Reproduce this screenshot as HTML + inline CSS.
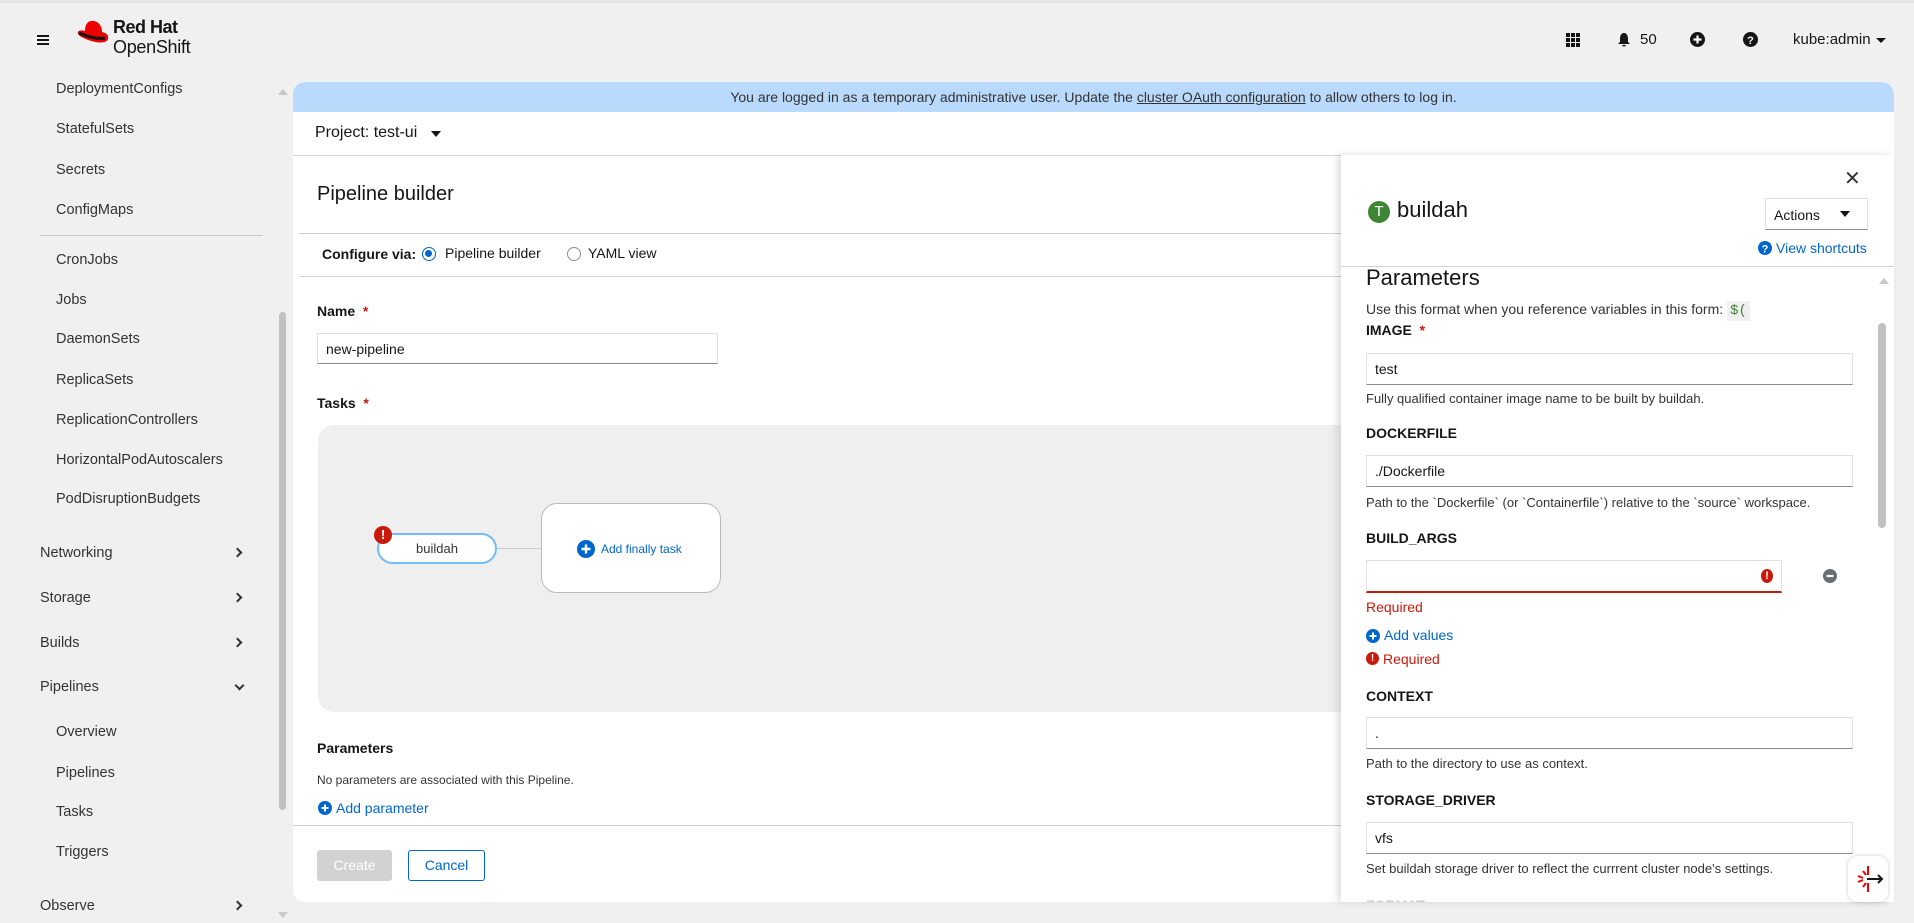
<!DOCTYPE html>
<html><head><meta charset="utf-8"><style>
*{box-sizing:border-box;margin:0;padding:0}
body{width:1914px;height:922px;overflow:hidden;background:#f0f0f0;font-family:"Liberation Sans",sans-serif;color:#151515;position:relative}
.a{position:absolute;white-space:nowrap}
.nav{font-size:14.5px;color:#333}
.lbl{font-size:14px;font-weight:bold}
.help{font-size:13px;color:#333}
.inp{position:absolute;background:#fff;border:1px solid #e0e0e0;border-bottom:1px solid #8a8d90;font-size:14px;padding:7px 8px}
.chev{position:absolute;width:7px;height:7px;border-right:2px solid #333;border-bottom:2px solid #333}
</style></head><body>
<div class="a" style="left:0;top:0;width:1914px;height:3px;background:#e4e4e4"></div>
<div class="a" style="left:37px;top:35px;width:12px;height:2px;background:#151515;box-shadow:0 4px 0 #151515,0 8px 0 #151515"></div>
<svg class="a" style="left:76px;top:18px" width="34" height="28" viewBox="0 0 34 28"><path d="M9 13 C9 6 12 2 18 3 C23 4 26 8 26 14 C31 15 33 18 32 21 C30 26 21 25 12 22 C5 19 1 17 2 14 C3 12 6 12 9 13Z" fill="#e00"/><path d="M3 15 C10 18 22 22 29 20" stroke="#151515" stroke-width="3" fill="none"/></svg>
<div class="a" style="left:113px;top:17px;font-size:18px;font-weight:bold;letter-spacing:-0.5px">Red Hat</div>
<div class="a" style="left:113px;top:37px;font-size:18px;letter-spacing:-0.3px">OpenShift</div>
<svg class="a" style="left:1566px;top:33px" width="14" height="14"><g fill="#151515"><rect x="0" y="0" width="4" height="4"/><rect x="5" y="0" width="4" height="4"/><rect x="10" y="0" width="4" height="4"/><rect x="0" y="5" width="4" height="4"/><rect x="5" y="5" width="4" height="4"/><rect x="10" y="5" width="4" height="4"/><rect x="0" y="10" width="4" height="4"/><rect x="5" y="10" width="4" height="4"/><rect x="10" y="10" width="4" height="4"/></g></svg>
<svg class="a" style="left:1617px;top:32px" width="14" height="16" viewBox="0 0 14 16"><path d="M7 1 C10 1 11 4 11 7 L11 10 L13 12 L1 12 L3 10 L3 7 C3 4 4 1 7 1Z M5 13 L9 13 C9 15 5 15 5 13Z" fill="#151515"/></svg>
<div class="a" style="left:1640px;top:31px;font-size:15px">50</div>
<svg class="a" style="left:1690px;top:32px" width="15" height="15"><circle cx="7.5" cy="7.5" r="7.5" fill="#151515"/><path d="M7.5 3.5v8M3.5 7.5h8" stroke="#fff" stroke-width="2.2"/></svg>
<svg class="a" style="left:1743px;top:32px" width="15" height="15"><circle cx="7.5" cy="7.5" r="7.5" fill="#151515"/><text x="7.5" y="12" font-size="11" font-weight="bold" fill="#fff" text-anchor="middle" font-family="Liberation Sans">?</text></svg>
<div class="a" style="left:1793px;top:31px;font-size:15px">kube:admin</div>
<div class="a" style="left:1876px;top:38px;border:5px solid transparent;border-top:5px solid #151515"></div>

<div class="a nav" style="left:56px;top:81px">DeploymentConfigs</div>
<div class="a nav" style="left:56px;top:121px">StatefulSets</div>
<div class="a nav" style="left:56px;top:162px">Secrets</div>
<div class="a nav" style="left:56px;top:202px">ConfigMaps</div>
<div class="a" style="left:40px;top:235px;width:223px;height:1px;background:#c7c7c7"></div>
<div class="a nav" style="left:56px;top:252px">CronJobs</div>
<div class="a nav" style="left:56px;top:292px">Jobs</div>
<div class="a nav" style="left:56px;top:331px">DaemonSets</div>
<div class="a nav" style="left:56px;top:372px">ReplicaSets</div>
<div class="a nav" style="left:56px;top:412px">ReplicationControllers</div>
<div class="a nav" style="left:56px;top:452px">HorizontalPodAutoscalers</div>
<div class="a nav" style="left:56px;top:491px">PodDisruptionBudgets</div>
<div class="a nav" style="left:40px;top:545px">Networking</div>
<div class="a nav" style="left:40px;top:590px">Storage</div>
<div class="a nav" style="left:40px;top:635px">Builds</div>
<div class="a nav" style="left:40px;top:679px">Pipelines</div>
<div class="a nav" style="left:56px;top:724px">Overview</div>
<div class="a nav" style="left:56px;top:765px">Pipelines</div>
<div class="a nav" style="left:56px;top:804px">Tasks</div>
<div class="a nav" style="left:56px;top:844px">Triggers</div>
<div class="a nav" style="left:40px;top:898px">Observe</div>
<div class="chev" style="left:234px;top:549px;transform:rotate(-45deg)"></div>
<div class="chev" style="left:234px;top:594px;transform:rotate(-45deg)"></div>
<div class="chev" style="left:234px;top:639px;transform:rotate(-45deg)"></div>
<div class="chev" style="left:236px;top:682px;transform:rotate(45deg)"></div>
<div class="chev" style="left:234px;top:902px;transform:rotate(-45deg)"></div>
<div class="a" style="left:278px;top:84px;border:5px solid transparent;border-bottom:6px solid #c8c8c8"></div>
<div class="a" style="left:279px;top:312px;width:7px;height:498px;background:#c1c1c1;border-radius:4px"></div>
<div class="a" style="left:278px;top:912px;border:5px solid transparent;border-top:6px solid #c8c8c8"></div>

<div class="a" style="left:293px;top:82px;width:1601px;height:820px;background:#fff;border-radius:12px;overflow:hidden">
 <div class="a" style="left:0;top:0;width:1601px;height:30px;background:#b9dafc;border-radius:12px 12px 0 0"></div>
 <div class="a" style="left:0;top:7px;width:1601px;text-align:center;font-size:14px;color:#333">You are logged in as a temporary administrative user. Update the <u>cluster OAuth configuration</u> to allow others to log in.</div>
 <div class="a" style="left:22px;top:42px;font-size:16px">Project: test-ui</div>
 <div class="a" style="left:138px;top:49px;border:5px solid transparent;border-top:6px solid #151515"></div>
 <div class="a" style="left:0;top:73px;width:1601px;height:1px;background:#d2d2d2"></div>
 <div class="a" style="left:24px;top:101px;font-size:20px">Pipeline builder</div>
 <div class="a" style="left:6px;top:151px;width:1100px;height:1px;background:#d2d2d2"></div>
 <div class="a" style="left:29px;top:164px;font-size:14px;font-weight:bold">Configure via:</div>
 <div class="a" style="left:129px;top:165px;width:14px;height:14px;border:1.5px solid #06c;border-radius:50%"><div style="margin:2px;width:7px;height:7px;background:#06c;border-radius:50%"></div></div>
 <div class="a" style="left:152px;top:163px;font-size:14px">Pipeline builder</div>
 <div class="a" style="left:274px;top:165px;width:14px;height:14px;border:1px solid #8a8d90;border-radius:50%"></div>
 <div class="a" style="left:295px;top:163px;font-size:14px">YAML view</div>
 <div class="a" style="left:6px;top:194px;width:1100px;height:1px;background:#d2d2d2"></div>
 <div class="a lbl" style="left:24px;top:221px">Name <span style="color:#c9190b">&nbsp;*</span></div>
 <div class="inp" style="left:24px;top:251px;width:401px;height:31px">new-pipeline</div>
 <div class="a lbl" style="left:24px;top:313px">Tasks <span style="color:#c9190b">&nbsp;*</span></div>
 <div class="a" style="left:25px;top:343px;width:1100px;height:287px;background:#efefef;border-radius:16px"></div>
 <div class="a" style="left:204px;top:466px;width:44px;height:1px;background:#ccc"></div>
 <div class="a" style="left:84px;top:451px;width:120px;height:31px;background:#fff;border:2px solid #73bcf7;border-radius:16px;text-align:center;font-size:13px;line-height:27px;color:#333">buildah</div>
 <div class="a" style="left:81px;top:444px;width:18px;height:18px;background:#c9190b;border-radius:50%;color:#fff;font-size:13px;font-weight:bold;text-align:center;line-height:18px">!</div>
 <div class="a" style="left:248px;top:421px;width:180px;height:90px;background:#fff;border:1px solid #b8bbbe;border-radius:16px"></div>
 <svg class="a" style="left:284px;top:458px" width="18" height="18"><circle cx="9" cy="9" r="9" fill="#06c"/><path d="M9 4.5v9M4.5 9h9" stroke="#fff" stroke-width="2.4"/></svg>
 <div class="a" style="left:308px;top:460px;font-size:12px;color:#06c">Add finally task</div>
 <div class="a lbl" style="left:24px;top:658px">Parameters</div>
 <div class="a" style="left:24px;top:691px;font-size:12px;color:#333">No parameters are associated with this Pipeline.</div>
 <svg class="a" style="left:25px;top:719px" width="14" height="14"><circle cx="7" cy="7" r="7" fill="#06c"/><path d="M7 3.5v7M3.5 7h7" stroke="#fff" stroke-width="2"/></svg>
 <div class="a" style="left:43px;top:718px;font-size:14px;color:#06c">Add parameter</div>
 <div class="a" style="left:0;top:743px;width:1100px;height:1px;background:#d2d2d2"></div>
 <div class="a" style="left:24px;top:768px;width:75px;height:31px;background:#d2d2d2;color:#fff;border-radius:3px;font-size:14px;text-align:center;line-height:31px">Create</div>
 <div class="a" style="left:115px;top:768px;width:77px;height:31px;border:1px solid #06c;color:#06c;border-radius:3px;font-size:14px;text-align:center;line-height:29px">Cancel</div>
</div>

<div class="a" style="left:1341px;top:155px;width:553px;height:747px;background:#fff;box-shadow:-4px 0 8px rgba(0,0,0,0.12);overflow:hidden">
 <div class="a" style="left:503px;top:11px;font-size:20px;color:#333">✕</div>
 <div class="a" style="left:27px;top:46px;width:22px;height:22px;border-radius:50%;background:#3e8635;color:#fff;font-size:15px;text-align:center;line-height:22px">T</div>
 <div class="a" style="left:56px;top:42px;font-size:22px">buildah</div>
 <div class="a" style="left:424px;top:43px;width:103px;height:32px;border:1px solid #e0e0e0;border-bottom:1px solid #8a8d90;font-size:14px;padding:8px 8px">Actions</div>
 <div class="a" style="left:499px;top:56px;border:5px solid transparent;border-top:6px solid #151515"></div>
 <svg class="a" style="left:417px;top:86px" width="14" height="14"><circle cx="7" cy="7" r="7" fill="#06c"/><text x="7" y="11.5" font-size="11" font-weight="bold" fill="#fff" text-anchor="middle" font-family="Liberation Sans">?</text></svg>
 <div class="a" style="left:435px;top:85px;font-size:14px;color:#06c">View shortcuts</div>
 <div class="a" style="left:0;top:111px;width:553px;height:1px;background:#d2d2d2"></div>
 <div class="a" style="left:25px;top:110px;font-size:22px">Parameters</div>
 <div class="a" style="left:538px;top:118px;border:5px solid transparent;border-bottom:6px solid #c8c8c8"></div>
 <div class="a" style="left:537px;top:168px;width:8px;height:205px;background:#c1c1c1;border-radius:4px"></div>
 <div class="a" style="left:25px;top:146px;font-size:14px;color:#333">Use this format when you reference variables in this form: <span style="background:#f0f0f0;color:#3e8635;font-family:'Liberation Mono',monospace;padding:2px 3px">$(</span></div>
 <div class="a lbl" style="left:25px;top:167px">IMAGE <span style="color:#c9190b">&nbsp;*</span></div>
 <div class="inp" style="left:25px;top:198px;width:487px;height:32px">test</div>
 <div class="a help" style="left:25px;top:236px">Fully qualified container image name to be built by buildah.</div>
 <div class="a lbl" style="left:25px;top:270px">DOCKERFILE</div>
 <div class="inp" style="left:25px;top:300px;width:487px;height:32px">./Dockerfile</div>
 <div class="a help" style="left:25px;top:340px">Path to the `Dockerfile` (or `Containerfile`) relative to the `source` workspace.</div>
 <div class="a lbl" style="left:25px;top:375px">BUILD_ARGS</div>
 <div class="inp" style="left:25px;top:405px;width:416px;height:33px;border-bottom:2px solid #c9190b"></div>
 <div class="a" style="left:420px;top:414px;width:12px;height:14px;background:#c9190b;border-radius:50%;color:#fff;font-size:11px;font-weight:bold;text-align:center;line-height:14px">!</div>
 <svg class="a" style="left:482px;top:414px" width="14" height="14"><circle cx="7" cy="7" r="7" fill="#6a6e73"/><path d="M3.5 7h7" stroke="#fff" stroke-width="2.2"/></svg>
 <div class="a" style="left:25px;top:444px;font-size:14px;color:#c9190b">Required</div>
 <svg class="a" style="left:25px;top:474px" width="14" height="14"><circle cx="7" cy="7" r="7" fill="#06c"/><path d="M7 3.5v7M3.5 7h7" stroke="#fff" stroke-width="2"/></svg>
 <div class="a" style="left:43px;top:472px;font-size:14px;color:#06c">Add values</div>
 <div class="a" style="left:25px;top:497px;width:13px;height:13px;background:#c9190b;border-radius:50%;color:#fff;font-size:10px;font-weight:bold;text-align:center;line-height:13px">!</div>
 <div class="a" style="left:42px;top:496px;font-size:14px;color:#c9190b">Required</div>
 <div class="a lbl" style="left:25px;top:533px">CONTEXT</div>
 <div class="inp" style="left:25px;top:562px;width:487px;height:32px">.</div>
 <div class="a help" style="left:25px;top:601px">Path to the directory to use as context.</div>
 <div class="a lbl" style="left:25px;top:637px">STORAGE_DRIVER</div>
 <div class="inp" style="left:25px;top:667px;width:487px;height:32px">vfs</div>
 <div class="a help" style="left:25px;top:706px">Set buildah storage driver to reflect the currrent cluster node's settings.</div>
 <div class="a lbl" style="left:25px;top:742px;color:#ccc">FORMAT</div>
</div>
<div class="a" style="left:1848px;top:856px;width:40px;height:46px;background:#fff;border-radius:10px;box-shadow:0 0 4px rgba(0,0,0,0.2)"></div>
<svg class="a" style="left:1855px;top:864px" width="30" height="30"><g stroke="#e00" stroke-width="2"><path d="M13 2v9M13 19v9M3 12l5 2M3 18l5-2M8 7l3 4M8 23l3-4"/></g><path d="M12 15h15M23 11l4 4-4 4" stroke="#151515" stroke-width="2" fill="none"/></svg>
</body></html>
